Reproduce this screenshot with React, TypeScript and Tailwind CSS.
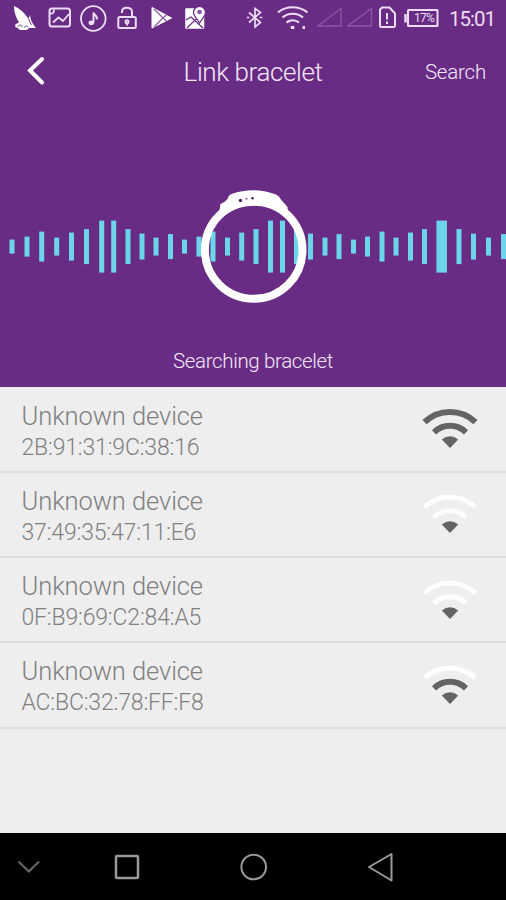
type Device = { mac: string; name: string; signal: 1 | 2 | 3 };

const devices: Device[] = [
  { name: "Unknown device", mac: "2B:91:31:9C:38:16", signal: 3 },
  { name: "Unknown device", mac: "37:49:35:47:11:E6", signal: 1 },
  { name: "Unknown device", mac: "0F:B9:69:C2:84:A5", signal: 1 },
  { name: "Unknown device", mac: "AC:BC:32:78:FF:F8", signal: 2 },
];

// [center x, height, width]
const bars: [number, number, number?][] = [
  [12, 14], [27, 20], [41.7, 30], [56.7, 18], [71.5, 28], [86.5, 35], [101.7, 52], [113.7, 52],
  [128, 35], [142, 26], [156, 18], [170.5, 25], [184.5, 14], [199, 20], [213, 30], [227.5, 18],
  [241.7, 28], [256, 35], [270.5, 52], [282.5, 52], [296.5, 35], [310.5, 26], [325, 18], [339, 25],
  [353.5, 14], [367.5, 20], [382, 30], [396, 18], [410.5, 28], [424.5, 35], [441.7, 52, 10.5],
  [459, 35], [473.5, 26], [488.5, 18], [503.5, 25],
];

function StatusBar() {
  return (
    <div className="flex h-9 items-start text-[#ecdcf4]">
      <svg className="ml-3 h-9 w-7" viewBox="12 0 28 36" fill="#fff">
        <path d="M14 6c5 2 11 7 14.5 13L30 15c.5 5 2 8 6 13h-7l-2 2h-7l-3-2.5c-2 0-2.5-2-1-3.5l3-1.5C16 18 14 12 14 6z" />
        <path d="M18 26.5c1.500-2.500 4-1.500 4 .5M24.500 27.500c.5-2 3-2 3.500 0M28.500 19l3 6" stroke="#692c84" strokeWidth="1" fill="none" />
      </svg>
      <svg className="ml-1.5 h-9 w-7" viewBox="46 0 28 36" fill="none" stroke="currentColor" strokeWidth="2">
        <rect x="49.5" y="8.5" width="20.5" height="18" rx="2.5" />
        <path d="M53 22.500l5.500-5 4.500 3.500 6-7M50 13.500c3 .5 4-1 4-4" strokeWidth="1.8" />
      </svg>
      <svg className="ml-1 h-9 w-8" viewBox="78 0 32 36" fill="none" stroke="currentColor" strokeWidth="1.8">
        <circle cx="93.3" cy="18.5" r="12.3" />
        <path d="M93.500 22.500V12.500c.5 3 4.500 3 3.200 7" strokeWidth="2" />
        <ellipse cx="91.3" cy="22.8" rx="2.8" ry="2.4" fill="currentColor" stroke="none" />
      </svg>
      <svg className="ml-1.5 h-9 w-6" viewBox="116 0 24 36" fill="none" stroke="currentColor" strokeWidth="2">
        <rect x="118.3" y="17" width="17.5" height="11" rx="1.5" />
        <path d="M122 13v-1.500c0-5 9.500-5 10 0V17M127 25.500V23" />
        <circle cx="127" cy="21.7" r="1.5" />
      </svg>
      <svg className="ml-2 h-9 w-7" viewBox="148 0 28 36" fill="#fff">
        <path d="M152 7.500l19.500 10.500L152 28z" stroke="#fff" strokeWidth="1" strokeLinejoin="round" />
        <path d="M154 9l9 9-9 9M163 18l4-3.500M163 18l4 3.500" stroke="#8658a0" strokeWidth="1.2" fill="none" />
      </svg>
      <svg className="ml-1.5 h-9 w-7" viewBox="182 0 28 36" fill="#fff">
        <path d="M186 9h17.500v19H186z" stroke="#fff" strokeWidth="1.5" strokeLinejoin="round" />
        <path d="M186 20l5-3 12 11M187 28l8-8 2-1" stroke="#692c84" strokeWidth="1.2" fill="none" />
        <path d="M199.500 23c-3-5-6-7-6-10.500a6 6 0 0 1 12 0c0 3.500-3 5.500-6 10.500z" stroke="#692c84" strokeWidth="1.2" />
        <circle cx="199.5" cy="12" r="2.3" fill="#8658a0" />
      </svg>
      <svg className="ml-9 h-9 w-5" viewBox="246 0 20 36" fill="none" stroke="currentColor" strokeWidth="1.7">
        <path d="M249 12.500l11.500 10L255 27V8.500l5.500 4-11.500 10" />
        <path d="M246.800 17.500h2.500M259.800 17.500h2.500" />
      </svg>
      <svg className="ml-2.5 h-9 w-9" viewBox="276 0 36 36" fill="none" stroke="currentColor" strokeWidth="2.2">
        <path d="M278 12.500c8-7 21-7 29.500 0M282.500 17.500c6-5 14.500-5 20.500 0M286.500 22.500c4-3 9-3 12.500 0" />
        <path d="M290.800 27.500h3.500M302.500 27.500h2.500" strokeWidth="3" />
      </svg>
      <svg className="ml-1 h-9 w-[60px]" viewBox="316 0 60 36" fill="none" stroke="#8a56a2" strokeWidth="1.4" strokeLinejoin="round">
        <path d="M318 26l23-17.500V26zM347.500 26l24-17.500V26z" />
      </svg>
      <svg className="ml-0.5 h-9 w-5" viewBox="378 0 20 36" fill="none" stroke="currentColor" strokeWidth="2">
        <path d="M380 9.500l2-2h7.500l5.500 6v12q0 1.500-1.500 1.500h-12q-1.500 0-1.500-1.500z" strokeLinejoin="round" />
        <path d="M387 13v6.500M387 21.500V24" />
      </svg>
      <div className="relative ml-1.5 h-9 w-9">
        <svg className="h-9 w-9" viewBox="404 0 36 36" fill="none" stroke="currentColor" strokeWidth="2">
          <rect x="408" y="10" width="29.5" height="16" rx=".5" />
          <path d="M405.500 14v8.500" strokeWidth="2.5" />
        </svg>
        <span className="absolute left-[10px] top-[10px] text-[12px] font-normal leading-4 tracking-[-0.7px]">17%</span>
      </div>
      <span className="ml-[9px] mt-[7px] whitespace-nowrap text-[20.5px] font-normal leading-6 tracking-[-1px]">15:01</span>
    </div>
  );
}

function Bracelet() {
  return (
    <svg className="h-[140px] w-[506px]" viewBox="0 180 506 140">
      {bars.map(([x, h, w = 5]) => (
        <rect key={x} x={x - w / 2} y={246.6 - h / 2} width={w} height={h} fill="#6dd5ea" />
      ))}
      <circle cx="253.7" cy="250" r="48.8" fill="none" stroke="#fff" strokeWidth="8" />
      <path
        d="M219 213l1.500-9c3-1 5-3 7-5 1-2 1-4 4-5 14-5 30-5 43 0 4 1.500 5 3 6 5l7 8 .5 9-6-1c-16-12-39-12-55-1z"
        fill="#fff"
      />
      <circle cx="240.5" cy="200.5" r="1.7" fill="#4b2464" />
      <circle cx="246.5" cy="198.7" r="1.2" fill="#a58ab2" />
      <circle cx="252.5" cy="198.3" r="1.3" fill="#4b2464" />
    </svg>
  );
}

const on = "#636466";
const off = "#fdfdfd";

function Signal({ level }: { level: number }) {
  return (
    <svg className="h-12 w-[58px]" viewBox="0 0 58 48" fill="none">
      <path d="M3.500 20.200A37 37 0 0 1 54.500 20.200" stroke={level > 2 ? on : off} strokeWidth={level > 2 ? 6 : 5} />
      <path d="M13 30.300A23 23 0 0 1 45 30.300" stroke={level > 1 ? on : off} strokeWidth={level > 1 ? 6 : 5} />
      <path d="M20.800 37.500q8.200-6.500 16.400 0L29 46z" fill={on} />
    </svg>
  );
}

function DeviceRow({ device }: { device: Device }) {
  return (
    <li className="flex h-[85.33px] items-start justify-between border-b-2 border-[#dfdfdf] pl-[21.5px] pr-[27px]">
      <div className="whitespace-nowrap pt-3 text-[#808080]">
        <p className="text-[25.5px] leading-8 tracking-[-0.08px]">{device.name}</p>
        <p className="text-[23px] leading-8 tracking-[-0.17px]">{device.mac}</p>
      </div>
      <div className="pt-[14.5px]">
        <Signal level={device.signal} />
      </div>
    </li>
  );
}

export default function App() {
  return (
    <main className="flex h-[900px] w-[506px] flex-col overflow-hidden bg-[#eeeeee] font-['Roboto',sans-serif] font-light">
      <section className="flex h-[387px] flex-col bg-[#692c84] text-[#f3e7f8]">
        <StatusBar />
        <header className="grid h-[68px] grid-cols-[120px_1fr_120px] items-center">
          <svg className="ml-6 h-8 w-6" viewBox="0 0 24 32" fill="none" stroke="#fff" strokeWidth="4">
            <path d="M18 5L6 16.500 18 28.500" strokeLinecap="round" />
          </svg>
          <h1 className="pt-1 text-center text-[26px] leading-8 tracking-[-0.4px]">Link bracelet</h1>
          <span className="pr-5 pt-1 text-right text-[20.5px] leading-6 tracking-[-0.2px]">Search</span>
        </header>
        <div className="pt-[76px]">
          <Bracelet />
        </div>
        <p className="pt-[29px] text-center text-[20.5px] leading-6 tracking-[-0.35px]">Searching bracelet</p>
      </section>

      <ul className="flex-1 pt-[0.5px]">
        {devices.map((d) => (
          <DeviceRow key={d.mac} device={d} />
        ))}
      </ul>

      <nav className="h-[67px] bg-black">
        <svg className="h-[67px] w-[506px]" viewBox="0 833 506 67" fill="none" stroke="#999" strokeWidth="2">
          <path d="M18.500 861.500l10.300 10 10.300-10" stroke="#666" />
          <rect x="116" y="856" width="22" height="22" rx="1" strokeWidth="2.5" />
          <circle cx="253.7" cy="867" r="12.3" />
          <path d="M391.500 854v26.500L369 867z" strokeLinejoin="round" />
        </svg>
      </nav>
    </main>
  );
}
